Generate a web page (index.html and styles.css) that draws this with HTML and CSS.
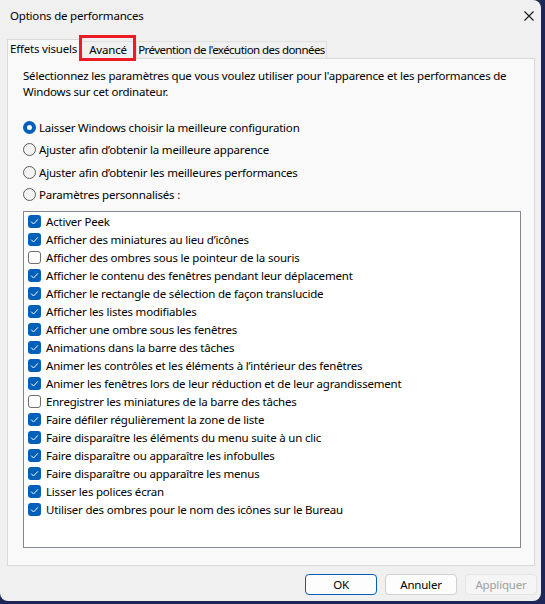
FILE: index.html
```html
<!DOCTYPE html>
<html lang="fr">
<head>
<meta charset="utf-8">
<title>Options de performances</title>
<link rel="stylesheet" href="styles.css">
</head>
<body>
<div class="window">
  <div class="titlebar">
    <span class="title">Options de performances</span>
    <svg class="close" width="10" height="10" viewBox="0 0 10 10"><path d="M0.5 0.5 L9.5 9.5 M9.5 0.5 L0.5 9.5" stroke="#1a1a1a" stroke-width="1.1" fill="none"/></svg>
  </div>
  <div class="tabs">
    <div class="tab tab-effets selected">Effets visuels</div>
    <div class="tab tab-avance">Avancé</div>
    <div class="tab tab-prev">Prévention de l'exécution des données</div>
    <div class="highlight"></div>
  </div>
  <div class="panel">
    <p class="intro">Sélectionnez les paramètres que vous voulez utiliser pour l'apparence et les performances de<br>Windows sur cet ordinateur.</p>
    <div class="radios">
      <div class="radio-row"><span class="radio on"></span><span>Laisser Windows choisir la meilleure configuration</span></div>
      <div class="radio-row"><span class="radio"></span><span>Ajuster afin d’obtenir la meilleure apparence</span></div>
      <div class="radio-row"><span class="radio"></span><span>Ajuster afin d’obtenir les meilleures performances</span></div>
      <div class="radio-row"><span class="radio"></span><span>Paramètres personnalisés :</span></div>
    </div>
    <div class="list">
      <div class="row"><span class="cb on"></span>Activer Peek</div>
      <div class="row"><span class="cb on"></span>Afficher des miniatures au lieu d’icônes</div>
      <div class="row"><span class="cb"></span>Afficher des ombres sous le pointeur de la souris</div>
      <div class="row"><span class="cb on"></span>Afficher le contenu des fenêtres pendant leur déplacement</div>
      <div class="row"><span class="cb on"></span>Afficher le rectangle de sélection de façon translucide</div>
      <div class="row"><span class="cb on"></span>Afficher les listes modifiables</div>
      <div class="row"><span class="cb on"></span>Afficher une ombre sous les fenêtres</div>
      <div class="row"><span class="cb on"></span>Animations dans la barre des tâches</div>
      <div class="row"><span class="cb on"></span>Animer les contrôles et les éléments à l’intérieur des fenêtres</div>
      <div class="row"><span class="cb on"></span>Animer les fenêtres lors de leur réduction et de leur agrandissement</div>
      <div class="row"><span class="cb"></span>Enregistrer les miniatures de la barre des tâches</div>
      <div class="row"><span class="cb on"></span>Faire défiler régulièrement la zone de liste</div>
      <div class="row"><span class="cb on"></span>Faire disparaître les éléments du menu suite à un clic</div>
      <div class="row"><span class="cb on"></span>Faire disparaître ou apparaître les infobulles</div>
      <div class="row"><span class="cb on"></span>Faire disparaître ou apparaître les menus</div>
      <div class="row"><span class="cb on"></span>Lisser les polices écran</div>
      <div class="row"><span class="cb on"></span>Utiliser des ombres pour le nom des icônes sur le Bureau</div>
    </div>
  </div>
  <div class="buttons">
    <button class="btn default">OK</button>
    <button class="btn">Annuler</button>
    <button class="btn disabled">Appliquer</button>
  </div>
</div>
</body>
</html>
```
FILE: styles.css
```css
html, body {
  margin: 0;
  padding: 0;
}
body {
  background: #1d2654;
  width: 545px;
  height: 604px;
  overflow: hidden;
  font-family: "Noto Sans", "DejaVu Sans", sans-serif;
  font-size: 11.5px;
  letter-spacing: -0.2px;
  color: #000;
}
.window {
  width: 541px;
  height: 601px;
  background: #f0f0f0;
  border-radius: 0 8px 8px 8px;
  display: flex;
  flex-direction: column;
  position: relative;
  overflow: hidden;
}
.titlebar {
  height: 31px;
  display: flex;
  align-items: center;
  justify-content: space-between;
  padding: 0 7px 0 10px;
}
.title {
  line-height: 31px;
}
.close {
  display: block;
}
.tabs {
  margin: 8px 0 0 7px;
  height: 19px;
  display: flex;
  align-items: flex-end;
  position: relative;
  z-index: 2;
}
.tab {
  box-sizing: border-box;
  height: 17px;
  border: 1px solid #e0e0e0;
  border-bottom: none;
  border-left: none;
  background: #f0f0f0;
  text-align: center;
  line-height: 16px;
  white-space: nowrap;
}
.tab.selected {
  height: 20px;
  margin-bottom: -1px;
  background: #f9f9f9;
  border: 1px solid #d9d9d9;
  border-bottom: none;
  line-height: 18px;
}
.tab-effets { width: 73px; }
.tab-avance { width: 57px; }
.tab-prev {
  width: 190px;
  letter-spacing: -0.55px;
}
.highlight {
  position: absolute;
  left: 72px;
  top: -4px;
  width: 57px;
  height: 26px;
  box-sizing: border-box;
  border: 3px solid #ed1c24;
}
.panel {
  box-sizing: border-box;
  margin: 0 6px 0 7px;
  height: 508px;
  background: #f9f9f9;
  border: 1px solid #d9d9d9;
  padding: 9px 13px 0 15px;
  position: relative;
  z-index: 1;
}
.intro {
  margin: 0;
  line-height: 16px;
  white-space: nowrap;
}
.radios {
  margin-top: 16px;
}
.radio-row {
  height: 22.5px;
  display: flex;
  align-items: center;
}
.radio {
  box-sizing: border-box;
  width: 13px;
  height: 13px;
  border-radius: 50%;
  border: 1px solid #5d5d5d;
  background: #f3f3f3;
  margin-right: 3px;
  flex: none;
}
.radio.on {
  border: 4px solid #005fb8;
  background: #fff;
}
.list {
  margin-top: 5px;
  box-sizing: border-box;
  height: 337px;
  background: #fff;
  border: 1px solid #828790;
  padding: 0 4px;
}
.row {
  height: 18px;
  display: flex;
  align-items: center;
  white-space: nowrap;
}
.cb {
  box-sizing: border-box;
  width: 13px;
  height: 13px;
  border-radius: 3px;
  border: 1px solid #6e6e6e;
  background: #fdfdfd;
  margin-right: 5px;
  flex: none;
}
.cb.on {
  border: none;
  background-color: #005fb8;
  background-image: url("data:image/svg+xml;utf8,<svg xmlns='http://www.w3.org/2000/svg' width='13' height='13' viewBox='0 0 13 13'><path d='M3.4 6.9 L5.5 9 L9.7 4.6' stroke='white' stroke-width='1' fill='none' stroke-linecap='round' stroke-linejoin='round'/></svg>");
}
.buttons {
  margin-top: 8px;
  display: flex;
  justify-content: flex-end;
  gap: 8px;
  padding-right: 4px;
}
.btn {
  box-sizing: border-box;
  width: 72px;
  height: 21px;
  font-family: inherit;
  font-size: 11.5px;
  letter-spacing: -0.2px;
  color: #000;
  background: #fdfdfd;
  border: 1px solid #d0d0d0;
  border-radius: 4px;
  padding: 0;
}
.btn.default {
  border: 1px solid #005fb8;
}
.btn.disabled {
  color: #a0a0a0;
  background: #f5f5f5;
  border-color: #e5e5e5;
}
```
